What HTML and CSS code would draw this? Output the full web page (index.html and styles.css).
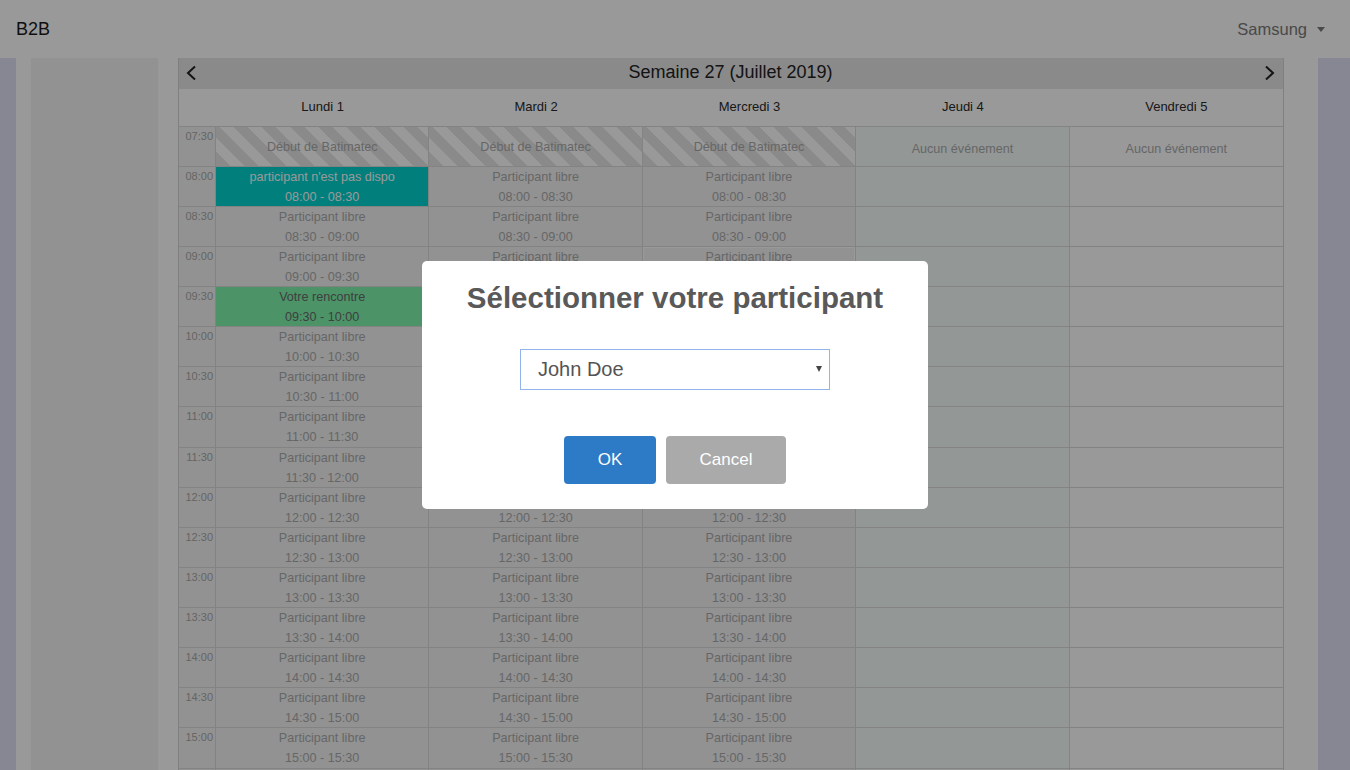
FILE: index.html
```html
<!DOCTYPE html>
<html lang="fr">
<head>
<meta charset="utf-8">
<title>B2B</title>
<link rel="stylesheet" href="styles.css">
</head>
<body>
<nav class="navbar">
  <span class="brand">B2B</span>
  <span class="user">Samsung <span class="caret"></span></span>
</nav>
<div class="page">
  <aside class="sidebar"></aside>
  <main class="main">
    <div class="cal">
      <div class="weekbar">
        <svg class="chev" width="12" height="16" viewBox="0 0 12 16"><polyline points="10,1.5 3,8 10,14.5" fill="none" stroke="#222" stroke-width="2"/></svg>
        <span class="weektitle">Semaine 27 (Juillet 2019)</span>
        <svg class="chev" width="12" height="16" viewBox="0 0 12 16"><polyline points="2,1.5 9,8 2,14.5" fill="none" stroke="#222" stroke-width="2"/></svg>
      </div>
      <div class="row head">
        <div class="hcell"></div>
        <div class="hcell">Lundi 1</div>
        <div class="hcell">Mardi 2</div>
        <div class="hcell">Mercredi 3</div>
        <div class="hcell">Jeudi 4</div>
        <div class="hcell">Vendredi 5</div>
      </div>
      <div class="row">
        <div class="time">07:30</div>
        <div class="cell striped">Début de Batimatec</div>
        <div class="cell striped">Début de Batimatec</div>
        <div class="cell striped">Début de Batimatec</div>
        <div class="cell today none">Aucun événement</div>
        <div class="cell free none">Aucun événement</div>
      </div>
      <div class="row">
        <div class="time">08:00</div>
        <div class="cell busy">participant n'est pas dispo<br>08:00 - 08:30</div>
        <div class="cell">Participant libre<br>08:00 - 08:30</div>
        <div class="cell">Participant libre<br>08:00 - 08:30</div>
        <div class="cell today"></div>
        <div class="cell free"></div>
      </div>
      <div class="row">
        <div class="time">08:30</div>
        <div class="cell">Participant libre<br>08:30 - 09:00</div>
        <div class="cell">Participant libre<br>08:30 - 09:00</div>
        <div class="cell">Participant libre<br>08:30 - 09:00</div>
        <div class="cell today"></div>
        <div class="cell free"></div>
      </div>
      <div class="row">
        <div class="time">09:00</div>
        <div class="cell">Participant libre<br>09:00 - 09:30</div>
        <div class="cell">Participant libre<br>09:00 - 09:30</div>
        <div class="cell hover">Participant libre<br>09:00 - 09:30</div>
        <div class="cell today"></div>
        <div class="cell free"></div>
      </div>
      <div class="row">
        <div class="time">09:30</div>
        <div class="cell meet">Votre rencontre<br>09:30 - 10:00</div>
        <div class="cell">Participant libre<br>09:30 - 10:00</div>
        <div class="cell">Participant libre<br>09:30 - 10:00</div>
        <div class="cell today"></div>
        <div class="cell free"></div>
      </div>
      <div class="row">
        <div class="time">10:00</div>
        <div class="cell">Participant libre<br>10:00 - 10:30</div>
        <div class="cell">Participant libre<br>10:00 - 10:30</div>
        <div class="cell">Participant libre<br>10:00 - 10:30</div>
        <div class="cell today"></div>
        <div class="cell free"></div>
      </div>
      <div class="row">
        <div class="time">10:30</div>
        <div class="cell">Participant libre<br>10:30 - 11:00</div>
        <div class="cell">Participant libre<br>10:30 - 11:00</div>
        <div class="cell">Participant libre<br>10:30 - 11:00</div>
        <div class="cell today"></div>
        <div class="cell free"></div>
      </div>
      <div class="row">
        <div class="time">11:00</div>
        <div class="cell">Participant libre<br>11:00 - 11:30</div>
        <div class="cell">Participant libre<br>11:00 - 11:30</div>
        <div class="cell">Participant libre<br>11:00 - 11:30</div>
        <div class="cell today"></div>
        <div class="cell free"></div>
      </div>
      <div class="row">
        <div class="time">11:30</div>
        <div class="cell">Participant libre<br>11:30 - 12:00</div>
        <div class="cell">Participant libre<br>11:30 - 12:00</div>
        <div class="cell">Participant libre<br>11:30 - 12:00</div>
        <div class="cell today"></div>
        <div class="cell free"></div>
      </div>
      <div class="row">
        <div class="time">12:00</div>
        <div class="cell">Participant libre<br>12:00 - 12:30</div>
        <div class="cell">Participant libre<br>12:00 - 12:30</div>
        <div class="cell">Participant libre<br>12:00 - 12:30</div>
        <div class="cell today"></div>
        <div class="cell free"></div>
      </div>
      <div class="row">
        <div class="time">12:30</div>
        <div class="cell">Participant libre<br>12:30 - 13:00</div>
        <div class="cell">Participant libre<br>12:30 - 13:00</div>
        <div class="cell">Participant libre<br>12:30 - 13:00</div>
        <div class="cell today"></div>
        <div class="cell free"></div>
      </div>
      <div class="row">
        <div class="time">13:00</div>
        <div class="cell">Participant libre<br>13:00 - 13:30</div>
        <div class="cell">Participant libre<br>13:00 - 13:30</div>
        <div class="cell">Participant libre<br>13:00 - 13:30</div>
        <div class="cell today"></div>
        <div class="cell free"></div>
      </div>
      <div class="row">
        <div class="time">13:30</div>
        <div class="cell">Participant libre<br>13:30 - 14:00</div>
        <div class="cell">Participant libre<br>13:30 - 14:00</div>
        <div class="cell">Participant libre<br>13:30 - 14:00</div>
        <div class="cell today"></div>
        <div class="cell free"></div>
      </div>
      <div class="row">
        <div class="time">14:00</div>
        <div class="cell">Participant libre<br>14:00 - 14:30</div>
        <div class="cell">Participant libre<br>14:00 - 14:30</div>
        <div class="cell">Participant libre<br>14:00 - 14:30</div>
        <div class="cell today"></div>
        <div class="cell free"></div>
      </div>
      <div class="row">
        <div class="time">14:30</div>
        <div class="cell">Participant libre<br>14:30 - 15:00</div>
        <div class="cell">Participant libre<br>14:30 - 15:00</div>
        <div class="cell">Participant libre<br>14:30 - 15:00</div>
        <div class="cell today"></div>
        <div class="cell free"></div>
      </div>
      <div class="row">
        <div class="time">15:00</div>
        <div class="cell">Participant libre<br>15:00 - 15:30</div>
        <div class="cell">Participant libre<br>15:00 - 15:30</div>
        <div class="cell">Participant libre<br>15:00 - 15:30</div>
        <div class="cell today"></div>
        <div class="cell free"></div>
      </div>
      <div class="row">
        <div class="time">15:30</div>
        <div class="cell">Participant libre<br>15:30 - 16:00</div>
        <div class="cell">Participant libre<br>15:30 - 16:00</div>
        <div class="cell">Participant libre<br>15:30 - 16:00</div>
        <div class="cell today"></div>
        <div class="cell free"></div>
      </div>
    </div>
  </main>
</div>

<div class="overlay">
  <div class="popup">
    <h2 class="popup-title">Sélectionner votre participant</h2>
    <div class="select">
      <span>John Doe</span>
      <span class="arrow"></span>
    </div>
    <div class="actions">
      <button class="btn btn-ok">OK</button>
      <button class="btn btn-cancel">Cancel</button>
    </div>
  </div>
</div>
</body>
</html>
```

FILE: styles.css
```css
html, body {
  margin: 0;
  padding: 0;
  overflow: hidden;
  height: 770px;
}

body {
  background: #e1e1f7;
  font-family: "Liberation Sans", Arial, sans-serif;
  color: #333;
}

.navbar {
  height: 58px;
  background: #fff;
  display: flex;
  align-items: center;
  justify-content: space-between;
  padding: 0 24px 0 16px;
  box-sizing: border-box;
}

.brand {
  font-size: 18px;
  color: #1a1a1a;
}

.user {
  font-size: 16.5px;
  color: #7a7a7a;
  display: flex;
  align-items: center;
  gap: 10px;
  margin-right: 1px;
}

.caret {
  width: 0;
  height: 0;
  border-left: 4.5px solid transparent;
  border-right: 4.5px solid transparent;
  border-top: 5px solid #7a7a7a;
}

.page {
  display: flex;
  width: 1302px;
  margin-left: 16px;
  background: #fff;
  padding-left: 15px;
  box-sizing: border-box;
  height: 712px;
  overflow: hidden;
}

.sidebar {
  width: 127px;
  background: #f4f4f4;
  flex: none;
}

.main {
  margin-left: 20px;
  width: 1106px;
  flex: none;
}

.cal {
  border-left: 1px solid #d6d6d6;
  border-right: 1px solid #d6d6d6;
}

.weekbar {
  height: 31px;
  background: #e6e6e6;
  display: flex;
  align-items: center;
  justify-content: space-between;
  padding: 0 7px 2px 6px;
  box-sizing: border-box;
}

.chev {
  display: block;
}

.weektitle {
  font-size: 18px;
  color: #222;
}

.row {
  display: grid;
  grid-template-columns: 37px repeat(5, 1fr);
  height: 40.14px;
  border-bottom: 1px solid #dadada;
  box-sizing: border-box;
}

.row.head {
  height: 37.5px;
  background: #fff;
}

.hcell {
  display: flex;
  align-items: center;
  justify-content: center;
  font-size: 13px;
  color: #2a2a2a;
  padding-bottom: 1px;
}

.time {
  background: #f4f4f4;
  border-right: 1px solid #dadada;
  font-size: 11px;
  color: #a8a8a8;
  text-align: right;
  padding: 3px 2px 0 0;
}

.cell {
  background: #f4f4f4;
  border-right: 1px solid #dadada;
  font-size: 12.6px;
  line-height: 20px;
  color: #ababab;
  text-align: center;
  overflow: hidden;
  white-space: nowrap;
}

.cell:last-child {
  border-right: none;
}

.cell.striped {
  background: repeating-linear-gradient(45deg, #e7e7e7 0 10px, #fff 10px 20px);
  padding-top: 10px;
}

.cell.none {
  padding-top: 12px;
}

.cell.today {
  background: #f5fdfa;
}

.cell.free {
  background: #fff;
}

.cell.busy {
  background: #00d4d0;
  color: #fff;
}

.cell.meet {
  background: #7ff5ad;
  color: #6a6a6a;
}

.cell.hover {
  box-shadow: inset 0 1px 0 #fff, inset 1px 0 0 #fff, inset -1px 0 0 #fff;
}

.overlay {
  position: fixed;
  inset: 0;
  background: rgba(0, 0, 0, 0.4);
  display: flex;
  align-items: center;
  justify-content: center;
}

.popup {
  width: 506px;
  height: 248px;
  box-sizing: border-box;
  background: #fff;
  border-radius: 5px;
  display: flex;
  flex-direction: column;
  align-items: center;
  padding-top: 19px;
}

.popup-title {
  margin: 0;
  font-size: 29.5px;
  line-height: 36px;
  font-weight: bold;
  color: #595959;
}

.select {
  margin-top: 33px;
  width: 310px;
  height: 41px;
  box-sizing: border-box;
  border: 1px solid #93b4ea;
  display: flex;
  align-items: center;
  justify-content: space-between;
  padding: 0 7px 0 17px;
  font-size: 20px;
  color: #545454;
}

.arrow {
  width: 0;
  height: 0;
  border-left: 3px solid transparent;
  border-right: 3px solid transparent;
  border-top: 6px solid #444;
  margin-top: -2px;
}

.actions {
  margin-top: 46px;
  display: flex;
  gap: 10px;
}

.btn {
  height: 48px;
  border: none;
  border-radius: 4px;
  color: #fff;
  font-family: "Liberation Sans", Arial, sans-serif;
  font-size: 17px;
  padding: 0;
}

.btn-ok {
  width: 92px;
  background: #2d7ac6;
}

.btn-cancel {
  width: 120px;
  background: #aaa;
}
```
